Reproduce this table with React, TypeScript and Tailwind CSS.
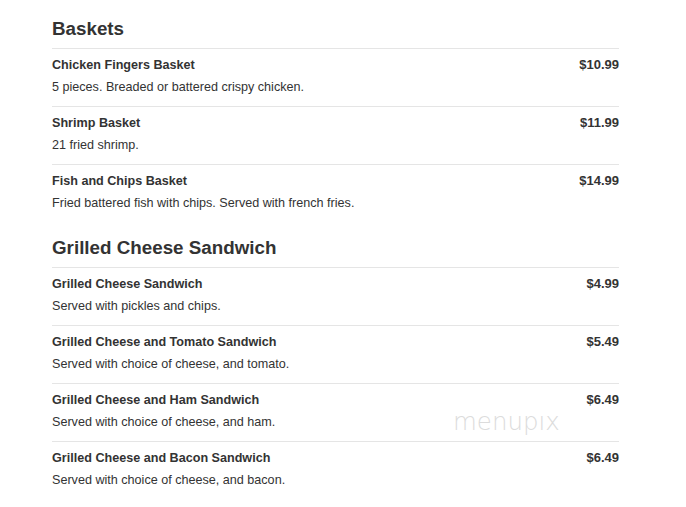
const sections = [
  {
    title: "Baskets",
    items: [
      { name: "Chicken Fingers Basket", desc: "5 pieces. Breaded or battered crispy chicken.", price: "$10.99" },
      { name: "Shrimp Basket", desc: "21 fried shrimp.", price: "$11.99" },
      { name: "Fish and Chips Basket", desc: "Fried battered fish with chips. Served with french fries.", price: "$14.99" },
    ],
  },
  {
    title: "Grilled Cheese Sandwich",
    items: [
      { name: "Grilled Cheese Sandwich", desc: "Served with pickles and chips.", price: "$4.99" },
      { name: "Grilled Cheese and Tomato Sandwich", desc: "Served with choice of cheese, and tomato.", price: "$5.49" },
      { name: "Grilled Cheese and Ham Sandwich", desc: "Served with choice of cheese, and ham.", price: "$6.49" },
      { name: "Grilled Cheese and Bacon Sandwich", desc: "Served with choice of cheese, and bacon.", price: "$6.49" },
    ],
  },
];

export default function App() {
  return (
    <div className="relative min-h-[507px] w-[686px] bg-white pt-[17px] font-['Liberation_Sans',Arial,sans-serif] text-[#333]">
      <div className="ml-[52px] w-[567px]">
        {sections.map((section, i) => (
          <section key={section.title} className={i > 0 ? "mt-[14px]" : ""}>
            <h2 className="pb-[7px] text-[18.8px] leading-[24px] font-bold text-[#333]">
              {section.title}
            </h2>
            {section.items.map((item) => (
              <div key={item.name} className="border-t border-[#e5e5e5] pt-[7px] pb-[10px]">
                <div className="flex justify-between text-[13px] leading-[18px] font-bold">
                  <span className="text-[12.6px]">{item.name}</span>
                  <span>{item.price}</span>
                </div>
                <p className="mt-1 text-[12.6px] leading-[18px]">{item.desc}</p>
              </div>
            ))}
          </section>
        ))}
      </div>

      {/* watermark */}
      <div className="pointer-events-none absolute top-[407px] left-[453px] font-['DejaVu_Sans',sans-serif] text-[24.5px] leading-[30px] font-extralight text-[#dcdcdc]">
        menupıx
      </div>
    </div>
  );
}
